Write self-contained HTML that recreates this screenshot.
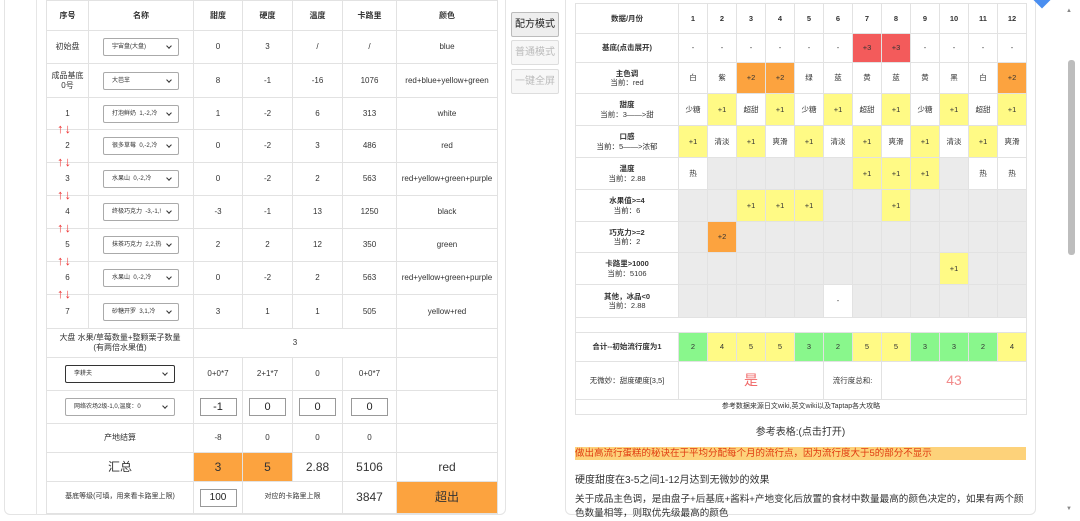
<!DOCTYPE html>
<html><head><meta charset="utf-8"><style>
*{box-sizing:border-box;margin:0;padding:0}
body{width:1080px;height:518px;overflow:hidden;background:#fff;font-family:"Liberation Sans","Noto Sans CJK SC",sans-serif;color:#333;position:relative}
.card{position:absolute;border:1px solid #e4e4e4;border-radius:6px;background:#fff}
table{border-collapse:collapse;table-layout:fixed;position:absolute}
td{border:1px solid #e2e2e2;text-align:center;vertical-align:middle;font-size:8px;line-height:1.25;overflow:hidden;white-space:nowrap}
#lt td{font-size:8px}
.sel{display:inline-block;width:76px;height:18px;border:1px solid #aaa;border-radius:2px;font-size:6px;text-align:left;padding-left:8px;line-height:16px;position:relative;background:#fff;color:#333}
.sel:after{content:"";position:absolute;right:7px;top:5px;width:3px;height:3px;border-right:1px solid #333;border-bottom:1px solid #333;transform:rotate(45deg)}
.inp{display:inline-block;width:37px;height:18px;border:1px solid #999;font-size:11px;line-height:16px;color:#222}
.or{background:#fca33f}
.rd{background:#f35b5b;color:#333}
.y{background:#fffa85}
.g{background:#89f78c}
.gr{background:#ebebeb}
.arr{position:absolute;left:57px;color:#e33;font-size:13px;line-height:12px;letter-spacing:1px}
b{font-weight:bold}
#rt td{font-size:7.5px}
.btn{position:absolute;left:511px;width:48px;height:25px;border:1px solid #ddd;border-radius:2px;font-size:10px;text-align:center;line-height:24px;color:#bbb;background:#f7f7f7}
</style></head><body>
<div class="card" style="left:4px;top:-8px;width:502px;height:523px"></div>
<div style="position:absolute;left:36px;top:0;width:1px;height:515px;background:#e6e6e6"></div>
<div class="card" style="left:565px;top:-8px;width:471px;height:523px"></div>

<table id="lt" style="left:46px;top:0;width:451px">
<colgroup><col style="width:42px"><col style="width:105px"><col style="width:49px"><col style="width:50px"><col style="width:50px"><col style="width:54px"><col style="width:101px"></colgroup>
<tr style="height:30px"><td><b>序号</b></td><td><b>名称</b></td><td><b>甜度</b></td><td><b>硬度</b></td><td><b>温度</b></td><td><b>卡路里</b></td><td><b>颜色</b></td></tr>
<tr style="height:33px"><td>初始盘</td><td><span class="sel">宇宙盘(大盘)</span></td><td>0</td><td>3</td><td>/</td><td>/</td><td>blue</td></tr>
<tr style="height:34px"><td>成品基底<br>0号</td><td><span class="sel">大芭芈</span></td><td>8</td><td>-1</td><td>-16</td><td>1076</td><td>red+blue+yellow+green</td></tr>
<tr style="height:32px"><td>1</td><td><span class="sel">打泡鲜奶 &nbsp;1,-2,冷</span></td><td>1</td><td>-2</td><td>6</td><td>313</td><td>white</td></tr>
<tr style="height:33px"><td>2</td><td><span class="sel">很多草莓 &nbsp;0,-2,冷</span></td><td>0</td><td>-2</td><td>3</td><td>486</td><td>red</td></tr>
<tr style="height:33px"><td>3</td><td><span class="sel">水果山 &nbsp;0,-2,冷</span></td><td>0</td><td>-2</td><td>2</td><td>563</td><td>red+yellow+green+purple</td></tr>
<tr style="height:33px"><td>4</td><td><span class="sel">终极巧克力 &nbsp;-3,-1,!</span></td><td>-3</td><td>-1</td><td>13</td><td>1250</td><td>black</td></tr>
<tr style="height:33px"><td>5</td><td><span class="sel">抹茶巧克力 &nbsp;2,2,热</span></td><td>2</td><td>2</td><td>12</td><td>350</td><td>green</td></tr>
<tr style="height:33px;border-bottom:1.5px solid #333"><td>6</td><td><span class="sel">水果山 &nbsp;0,-2,冷</span></td><td>0</td><td>-2</td><td>2</td><td>563</td><td>red+yellow+green+purple</td></tr>
<tr style="height:34px;border-bottom:1.5px solid #f09090"><td>7</td><td><span class="sel">砂糖开罗 &nbsp;3,1,冷</span></td><td>3</td><td>1</td><td>1</td><td>505</td><td>yellow+red</td></tr>
<tr style="height:29px"><td colspan="2">大盘 水果/草莓数量+整颗栗子数量<br>(有两倍水果值)</td><td colspan="4">3</td><td></td></tr>
<tr style="height:33px"><td colspan="2"><span class="sel" style="width:110px;border:1.5px solid #333">李耕夫</span></td><td>0+0*7</td><td>2+1*7</td><td>0</td><td>0+0*7</td><td></td></tr>
<tr style="height:33px"><td colspan="2"><span class="sel" style="width:110px">网络农场2级-1,0,温度：0</span></td><td><span class="inp">-1</span></td><td><span class="inp">0</span></td><td><span class="inp">0</span></td><td><span class="inp">0</span></td><td></td></tr>
<tr style="height:29px"><td colspan="2">产地结算</td><td>-8</td><td>0</td><td>0</td><td>0</td><td></td></tr>
<tr style="height:29px"><td colspan="2" style="font-size:12px">汇总</td><td class="or" style="font-size:12px">3</td><td class="or" style="font-size:12px">5</td><td style="font-size:12px">2.88</td><td style="font-size:12px">5106</td><td style="font-size:12px">red</td></tr>
<tr style="height:32px"><td colspan="2" style="font-size:7px">基底等级(可填，用来看卡路里上限)</td><td><span class="inp" style="font-size:10px">100</span></td><td colspan="2" style="font-size:7px">对应的卡路里上限</td><td style="font-size:12px">3847</td><td class="or" style="font-size:12px">超出</td></tr>
</table>
<div class="arr" style="top:123px">↑↓</div>
<div class="arr" style="top:156px">↑↓</div>
<div class="arr" style="top:189px">↑↓</div>
<div class="arr" style="top:222px">↑↓</div>
<div class="arr" style="top:255px">↑↓</div>
<div class="arr" style="top:288px">↑↓</div>

<div class="btn" style="top:12px;color:#222;background:#eee;border-color:#bbb">配方模式</div>
<div class="btn" style="top:40px">普通模式</div>
<div class="btn" style="top:69px">一键全屏</div>

<table id="rt" style="left:575px;top:3px;width:451px">
<colgroup><col style="width:103px"><col span="12" style="width:29px"></colgroup>
<tr style="height:30px"><td><b>数据/月份</b></td><td><b>1</b></td><td><b>2</b></td><td><b>3</b></td><td><b>4</b></td><td><b>5</b></td><td><b>6</b></td><td><b>7</b></td><td><b>8</b></td><td><b>9</b></td><td><b>10</b></td><td><b>11</b></td><td><b>12</b></td></tr>
<tr style="height:29px"><td><b>基底(点击展开)</b></td><td>-</td><td>-</td><td>-</td><td>-</td><td>-</td><td>-</td><td class="rd">+3</td><td class="rd">+3</td><td>-</td><td>-</td><td>-</td><td>-</td></tr>
<tr style="height:31px"><td><b>主色调</b><br>当前：red</td><td>白</td><td>紫</td><td class="or">+2</td><td class="or">+2</td><td>绿</td><td>蓝</td><td>黄</td><td>蓝</td><td>黄</td><td>黑</td><td>白</td><td class="or">+2</td></tr>
<tr style="height:32px"><td><b>甜度</b><br>当前：3——&gt;甜</td><td>少糖</td><td class="y">+1</td><td>超甜</td><td class="y">+1</td><td>少糖</td><td class="y">+1</td><td>超甜</td><td class="y">+1</td><td>少糖</td><td class="y">+1</td><td>超甜</td><td class="y">+1</td></tr>
<tr style="height:32px"><td><b>口感</b><br>当前：5——&gt;浓郁</td><td class="y">+1</td><td>清淡</td><td class="y">+1</td><td>爽滑</td><td class="y">+1</td><td>清淡</td><td class="y">+1</td><td>爽滑</td><td class="y">+1</td><td>清淡</td><td class="y">+1</td><td>爽滑</td></tr>
<tr style="height:32px"><td><b>温度</b><br>当前：2.88</td><td>热</td><td class="gr"></td><td class="gr"></td><td class="gr"></td><td class="gr"></td><td class="gr"></td><td class="y">+1</td><td class="y">+1</td><td class="y">+1</td><td class="gr"></td><td>热</td><td>热</td></tr>
<tr style="height:32px"><td><b>水果值&gt;=4</b><br>当前：6</td><td class="gr"></td><td class="gr"></td><td class="y">+1</td><td class="y">+1</td><td class="y">+1</td><td class="gr"></td><td class="gr"></td><td class="y">+1</td><td class="gr"></td><td class="gr"></td><td class="gr"></td><td class="gr"></td></tr>
<tr style="height:31px"><td><b>巧克力&gt;=2</b><br>当前：2</td><td class="gr"></td><td class="or">+2</td><td class="gr"></td><td class="gr"></td><td class="gr"></td><td class="gr"></td><td class="gr"></td><td class="gr"></td><td class="gr"></td><td class="gr"></td><td class="gr"></td><td class="gr"></td></tr>
<tr style="height:32px"><td><b>卡路里&gt;1000</b><br>当前：5106</td><td class="gr"></td><td class="gr"></td><td class="gr"></td><td class="gr"></td><td class="gr"></td><td class="gr"></td><td class="gr"></td><td class="gr"></td><td class="gr"></td><td class="y">+1</td><td class="gr"></td><td class="gr"></td></tr>
<tr style="height:33px"><td><b>其他，冰品&lt;0</b><br>当前：2.88</td><td class="gr"></td><td class="gr"></td><td class="gr"></td><td class="gr"></td><td class="gr"></td><td>-</td><td class="gr"></td><td class="gr"></td><td class="gr"></td><td class="gr"></td><td class="gr"></td><td class="gr"></td></tr>
<tr style="height:15px"><td colspan="13" style="border-left:1px solid #e2e2e2"></td></tr>
<tr style="height:29px"><td><b>合计--初始流行度为1</b></td><td class="g">2</td><td class="y">4</td><td class="y">5</td><td class="y">5</td><td class="g">3</td><td class="g">2</td><td class="y">5</td><td class="y">5</td><td class="g">3</td><td class="g">3</td><td class="g">2</td><td class="y">4</td></tr>
<tr style="height:38px"><td>无微妙：甜度硬度[3,5]</td><td colspan="5" style="color:#f06a6a;font-size:14px">是</td><td colspan="2">流行度总和:</td><td colspan="5" style="color:#f28a8a;font-size:14px">43</td></tr>
<tr style="height:15px"><td colspan="13" style="font-size:7px">参考数据来源日文wiki,英文wiki以及Taptap各大攻略</td></tr>
</table>

<div style="position:absolute;left:575px;top:423px;width:451px;text-align:center;font-size:10px;color:#333">参考表格:(点击打开)</div>
<div style="position:absolute;left:575px;top:447px;width:451px;height:13px;background:#fdd27a;font-size:9.5px;line-height:13px;color:#e03a10">做出高流行蛋糕的秘诀在于平均分配每个月的流行点，因为流行度大于5的部分不显示</div>
<div style="position:absolute;left:575px;top:471px;font-size:10px;color:#333">硬度甜度在3-5之间1-12月达到无微妙的效果</div>
<div style="position:absolute;left:575px;top:493px;width:458px;font-size:9.6px;line-height:14px;color:#333">关于成品主色调，是由盘子+后基底+酱料+产地变化后放置的食材中数量最高的颜色决定的，如果有两个颜色数量相等，则取优先级最高的颜色</div>

<div style="position:absolute;left:1036px;top:-6px;width:12px;height:12px;background:#4a8ef0;transform:rotate(45deg)"></div>
<div style="position:absolute;left:1066px;top:8px;font-size:6px;color:#888">▲</div>
<div style="position:absolute;left:1068px;top:60px;width:7px;height:195px;background:#bdbdbd;border-radius:3px"></div>
<div style="position:absolute;left:1066px;top:506px;font-size:6px;color:#888">▼</div>
</body></html>
